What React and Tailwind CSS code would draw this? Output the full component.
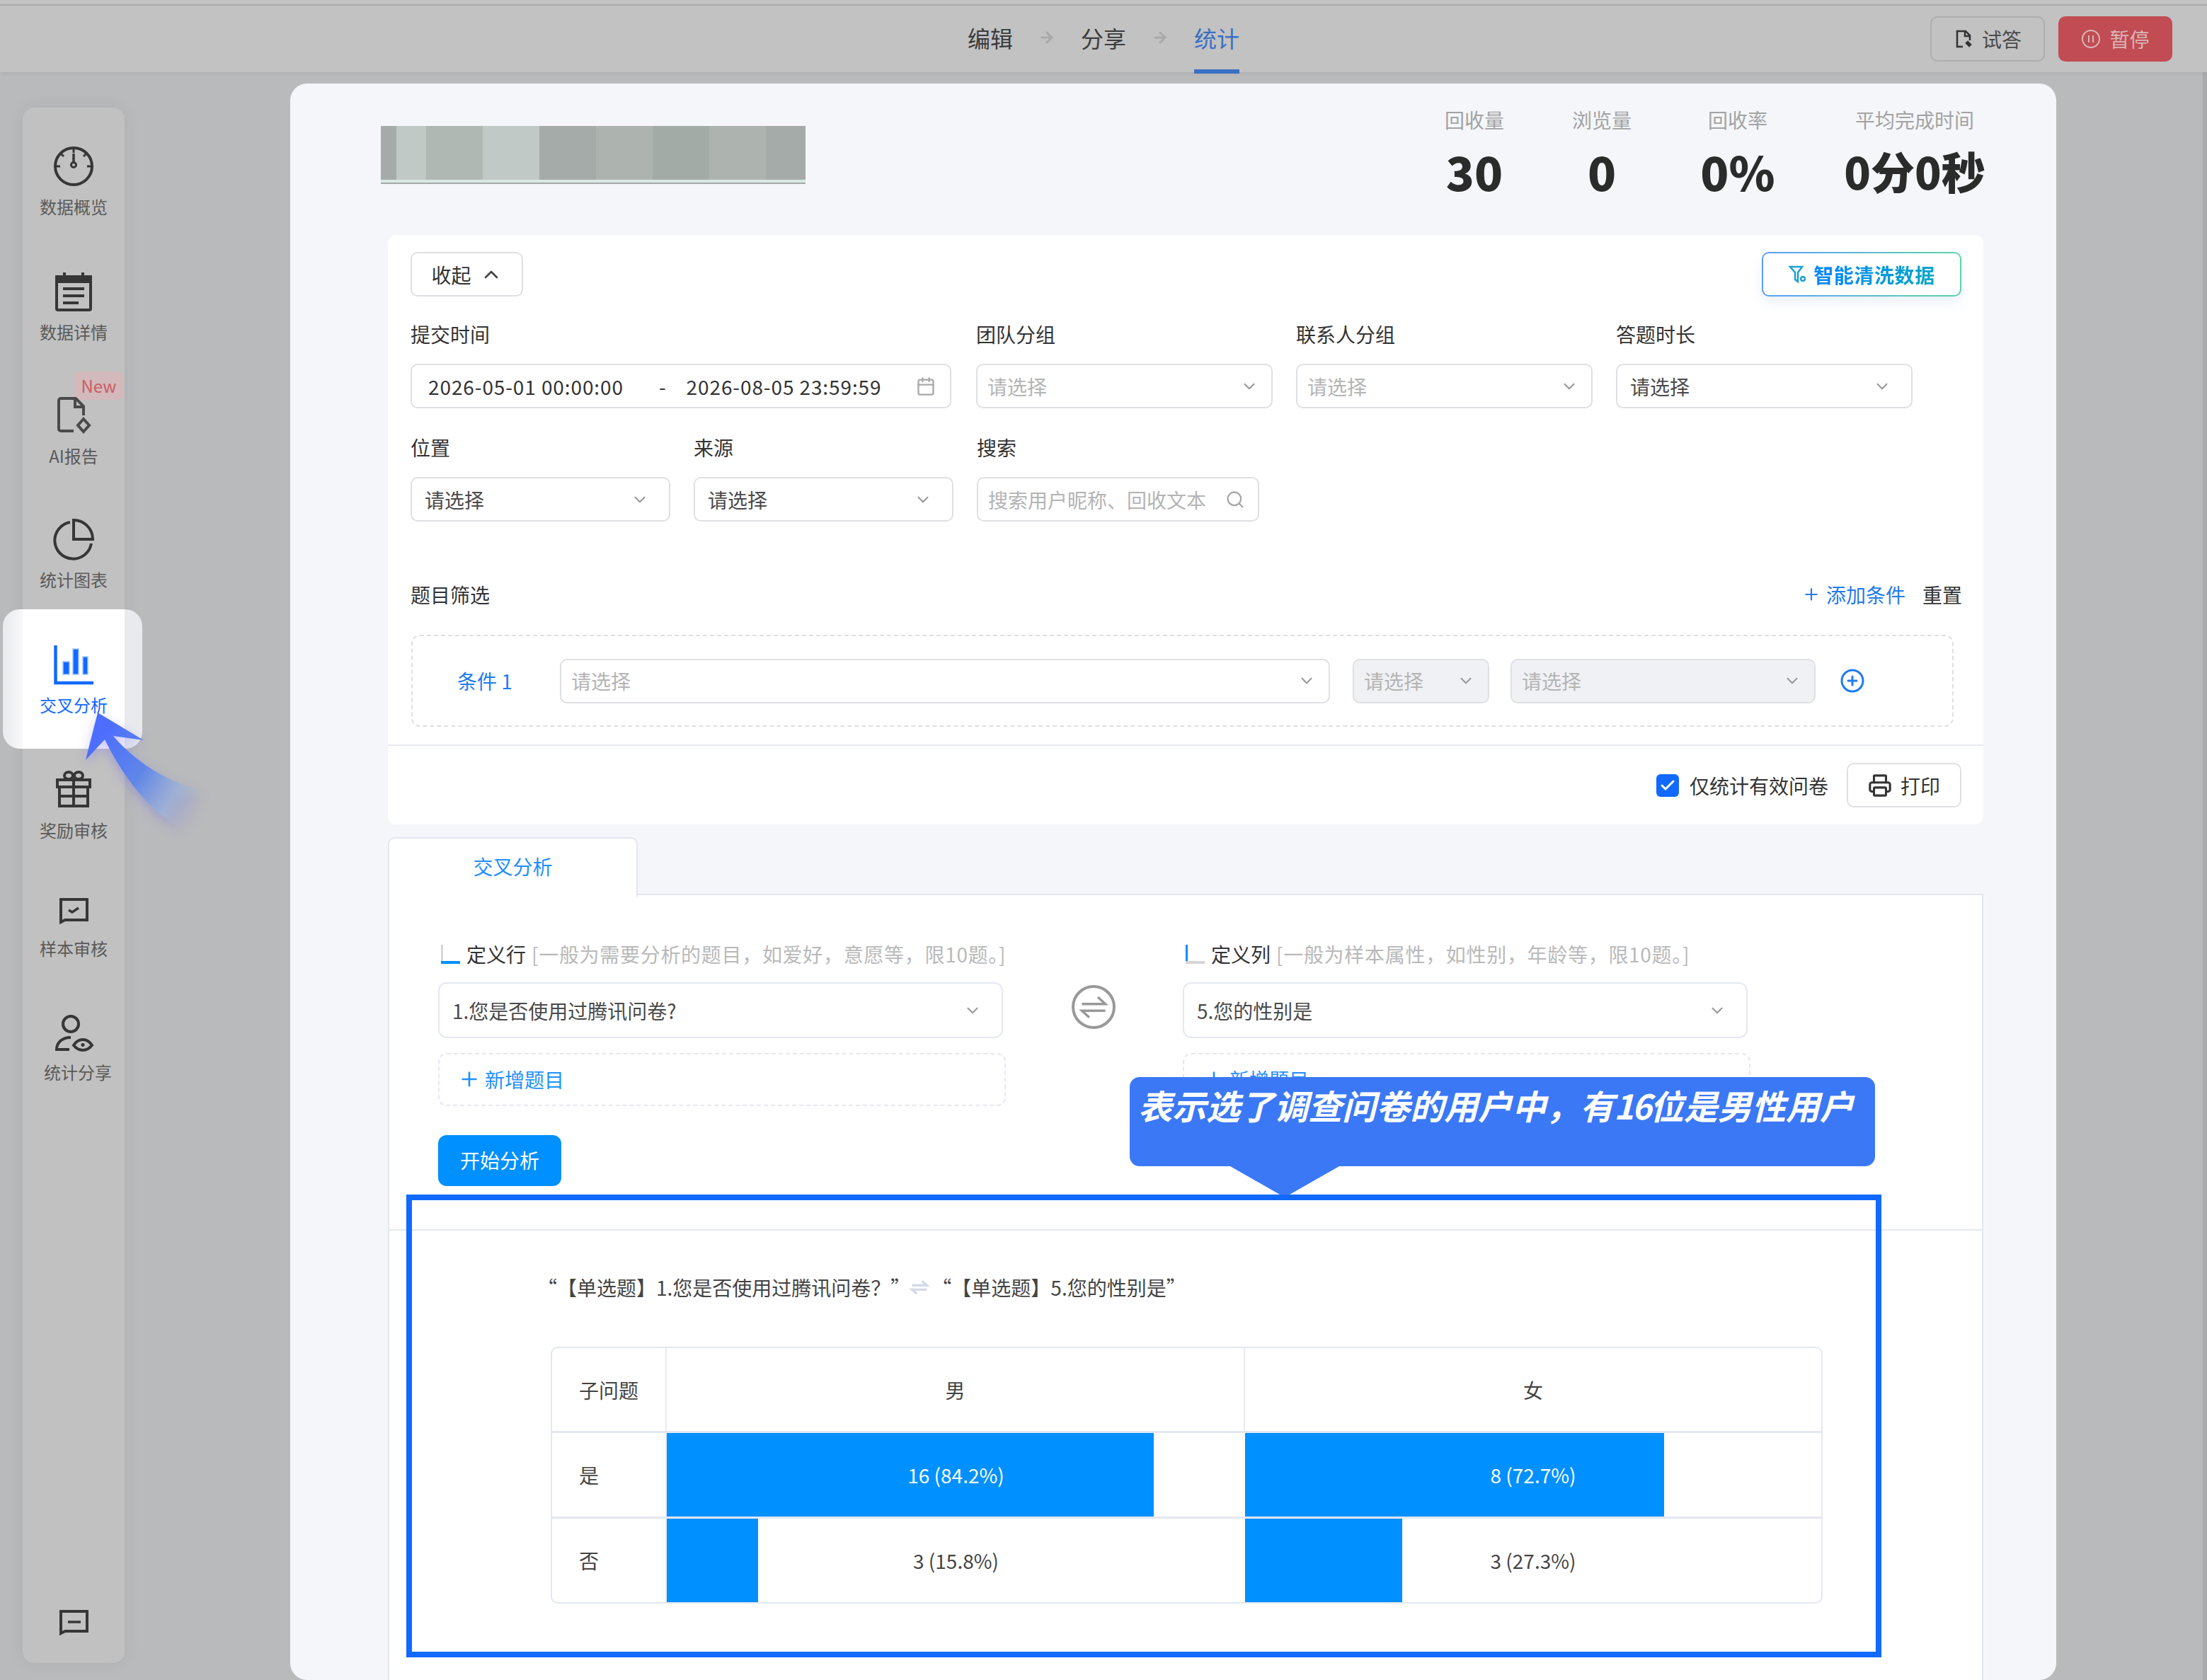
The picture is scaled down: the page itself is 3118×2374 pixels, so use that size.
import { ArrowRight, Calendar, ChevronDown, ChevronUp, Check, CirclePlus, Plus, Printer, Search } from 'lucide-react'

const FONT = "font-['Noto_Sans_CJK_SC','Noto_Sans',sans-serif]"

function GaugeIcon() {
  return (
    <svg viewBox="0 0 60 60" className="h-[60px] w-[60px]" fill="none" stroke="#363636" strokeWidth="4">
      <circle cx="30" cy="30" r="26" />
      <path d="M30 5v6M5 30h6M49 30h6M12 12l4 4M48 12l-4 4" strokeWidth="3" />
      <path d="M30 12v12" strokeWidth="3.5" />
      <circle cx="30" cy="28" r="3.5" strokeWidth="3" />
    </svg>
  )
}

function NoteIcon() {
  return (
    <svg viewBox="0 0 60 60" className="h-[60px] w-[60px]" fill="none" stroke="#363636" strokeWidth="4">
      <rect x="6" y="9" width="48" height="47" rx="2" />
      <path d="M6 9h48v7H6z" fill="#363636" />
      <path d="M17 3v10M43 3v10" />
      <path d="M15 26h30M15 36h30M15 46h22" />
    </svg>
  )
}

function AiFileIcon() {
  return (
    <svg viewBox="0 0 60 60" className="h-[60px] w-[60px]" fill="none" stroke="#4a4a4a" strokeWidth="4">
      <path d="M30 52H12a3 3 0 0 1-3-3V9a3 3 0 0 1 3-3h21l11 11v13" />
      <path d="M32 6v12h12" />
      <path d="M44 35l8 9-8 9-8-9z" />
    </svg>
  )
}

function PieIcon() {
  return (
    <svg viewBox="0 0 60 60" className="h-[60px] w-[60px]" fill="none" stroke="#363636" strokeWidth="4">
      <path d="M25 6a26 26 0 1 0 30 30" />
      <path d="M30 3a27 27 0 0 1 27 27H30z" />
    </svg>
  )
}

function BarsIcon() {
  return (
    <svg viewBox="0 0 60 60" className="h-[60px] w-[60px]">
      <path d="M4.500 3v53h53.500" fill="none" stroke="#1169ff" strokeWidth="4.500" />
      <path d="M15 26h9v18h-9zM29 8h8v36h-8zM43 19h7v25h-7z" fill="#1169ff" stroke="#9fc3ff" strokeWidth="1.500" />
    </svg>
  )
}

function GiftIcon() {
  return (
    <svg viewBox="0 0 60 60" className="h-[60px] w-[60px]" fill="none" stroke="#363636" strokeWidth="4">
      <path d="M7 16h46v10H7zM10 26v27h40V26M30 16v37M10 39h40" />
      <ellipse cx="23" cy="10" rx="6" ry="5" />
      <ellipse cx="37" cy="10" rx="6" ry="5" />
    </svg>
  )
}

function MessageCheckIcon() {
  return (
    <svg viewBox="0 0 60 60" className="h-[60px] w-[60px]" fill="none" stroke="#363636" strokeWidth="4">
      <path d="M12 18h37v29H18l-6 3z" />
      <path d="M23 33l5 3 9-6" strokeWidth="3.500" />
    </svg>
  )
}

function ShareEyeIcon() {
  return (
    <svg viewBox="0 0 60 60" className="h-[60px] w-[60px]" fill="none" stroke="#363636" strokeWidth="4">
      <g transform="translate(0 3)">
        <circle cx="26" cy="16" r="11" />
        <path d="M24 52H6c0-10 8-17 20-17" />
        <path d="M30 46c4-6 8-8 13-8s9 2 13 8c-4 5-8 7-13 7s-9-2-13-7z" />
        <circle cx="43" cy="45.500" r="2.500" fill="#363636" stroke="none" />
      </g>
    </svg>
  )
}

function FeedbackIcon() {
  return (
    <svg viewBox="0 0 60 60" className="h-[60px] w-[60px]" fill="none" stroke="#363636" strokeWidth="4">
      <path d="M12 14h37v28H18l-6 3z" />
      <path d="M22 29h18" strokeWidth="3.500" />
    </svg>
  )
}

function SwapIcon({ className, stroke = '#999999', strokeWidth = 4 }) {
  return (
    <svg viewBox="0 0 62 62" className={className} fill="none" stroke={stroke} strokeWidth={strokeWidth}>
      <path d="M12 26h38L38 15M50 37H12l12 11" />
    </svg>
  )
}

function FunnelIcon() {
  return (
    <svg viewBox="0 0 28 28" className="h-[28px] w-[28px]" fill="none" stroke="#1f9fd0" strokeWidth="2.500">
      <path d="M3 3h17l-6 8v13l-4-3V11z" />
      <circle cx="21" cy="20" r="3" />
    </svg>
  )
}

const navItems = [
  { label: '数据概览', icon: <GaugeIcon />, height: 'h-[177px]' },
  { label: '数据详情', icon: <NoteIcon />, height: 'h-[175px]' },
  { label: 'AI报告', icon: <AiFileIcon />, height: 'h-[175px]', isNew: true },
  { label: '统计图表', icon: <PieIcon />, height: 'h-[177px]' },
  { label: '交叉分析', icon: <BarsIcon />, height: 'h-[177px]', active: true },
  { label: '奖励审核', icon: <GiftIcon />, height: 'h-[167px]' },
  { label: '样本审核', icon: <MessageCheckIcon />, height: 'h-[175px]' },
  { label: '统计分享', icon: <ShareEyeIcon />, height: 'h-[120px]', shift: 'pl-[12px]' },
]

function NavItem({ item }) {
  return (
    <div className={`relative flex flex-col items-center ${item.height}`}>
      {item.active && (
        <div className="absolute -top-[48px] left-[-28px] h-[197px] w-[197px] rounded-[24px] bg-[linear-gradient(90deg,#e9eaee_0,#f8f8fa_28px,#ffffff_28px,#ffffff_172px,#e9eaee_172px)]" />
      )}
      {item.isNew && (
        <span className="absolute -top-[32px] right-[1px] flex h-[40px] w-[71px] items-center justify-center rounded-[8px] bg-[#d3b9bb] text-[24px] text-[#cd5b64]">
          New
        </span>
      )}
      <div className="relative">{item.icon}</div>
      <span
        className={`relative mt-[11px] text-[24px] leading-[32px] ${item.shift || ''} ${
          item.active ? 'text-[#1169ff]' : 'text-[#5a5a5a]'
        }`}
      >
        {item.label}
      </span>
    </div>
  )
}

function Sidebar() {
  return (
    <aside className="ml-[32px] mt-[50px] flex h-[2198px] w-[144px] flex-col rounded-[16px] bg-[#c1c1c1] pt-[53px] shadow-[0_0_24px_rgba(0,0,0,0.06)]">
      {navItems.map((item) => (
        <NavItem key={item.label} item={item} />
      ))}
      <div className="mt-auto mb-[27px] flex justify-center">
        <FeedbackIcon />
      </div>
    </aside>
  )
}

function TopBar() {
  return (
    <header className="relative z-10 grid h-[102px] shrink-0 grid-cols-[1fr_auto_1fr] items-center bg-[#c2c2c2] pt-[8px] shadow-[0_2px_6px_rgba(0,0,0,0.06)]">
      <div className="absolute inset-x-0 top-[6px] h-[2px] bg-[#a9a9a9]" />
      <div />
      <nav className="flex items-center gap-[36px] pb-[5px] text-[32px] text-[#3c3c3c]">
        <span>编辑</span>
        <ArrowRight size={24} color="#a9a9a9" strokeWidth={3} />
        <span>分享</span>
        <ArrowRight size={24} color="#a9a9a9" strokeWidth={3} />
        <span className="relative text-[#3a6fc4]">
          统计
          <span className="absolute -bottom-[27px] left-0 h-[6px] w-full bg-[#3a6fc4]" />
        </span>
      </nav>
      <div className="flex justify-end gap-[19px] pr-[49px]">
        <button className="flex h-[64px] w-[162px] items-center justify-center gap-[12px] rounded-[10px] border-2 border-[#aeaeae] text-[28px] text-[#4a4a4a]">
          <svg viewBox="0 0 28 28" className="h-[28px] w-[28px]" fill="none" stroke="#333333" strokeWidth="2.500">
            <path d="M13 25H5V3h12l6 6v7M16 3v7h7" />
            <path d="M20 18l4 4-2 2-4-4z" fill="#333333" />
          </svg>
          试答
        </button>
        <button className="flex h-[64px] w-[161px] items-center justify-center gap-[12px] rounded-[10px] bg-[#c14c53] text-[28px] text-[#d8b7b9]">
          <svg viewBox="0 0 28 28" className="h-[28px] w-[28px]" fill="none" stroke="#d8b7b9" strokeWidth="2">
            <circle cx="14" cy="14" r="12" />
            <path d="M11 9v10M17 9v10" />
          </svg>
          暂停
        </button>
      </div>
    </header>
  )
}

const mosaic = [
  { width: 'w-[22px]', color: 'bg-[#a5aba8]' },
  { width: 'w-[42px]', color: 'bg-[#c0c9c5]' },
  { width: 'w-[80px]', color: 'bg-[#b0b8b4]' },
  { width: 'w-[80px]', color: 'bg-[#c0c9c5]' },
  { width: 'w-[80px]', color: 'bg-[#a5aba8]' },
  { width: 'w-[80px]', color: 'bg-[#adb4b0]' },
  { width: 'w-[80px]', color: 'bg-[#a3aba7]' },
  { width: 'w-[80px]', color: 'bg-[#adb4b0]' },
  { width: 'w-[56px]', color: 'bg-[#a5aba8]' },
]

const stats = [
  { label: '回收量', value: '30', width: 'w-[160px]', size: 'text-[66px]' },
  { label: '浏览量', value: '0', width: 'w-[200px]', size: 'text-[66px]' },
  { label: '回收率', value: '0%', width: 'w-[184px]', size: 'text-[66px]' },
  { label: '平均完成时间', value: '0分0秒', width: 'w-[316px]', size: 'text-[62px]' },
]

function SummaryRow() {
  return (
    <div className="flex h-[214px] justify-between pl-[128px] pr-[42px]">
      <div className="mt-[60px] w-[600px]">
        <div className="flex h-[76px]">
          {mosaic.map((m, i) => (
            <div key={i} className={`${m.width} ${m.color}`} />
          ))}
        </div>
        <div className="h-[4px] bg-[#d8e8e4]" />
        <div className="h-[2px] bg-[#a5aba8]" />
      </div>
      <div className="flex pt-[31px]">
        {stats.map((s) => (
          <div key={s.label} className={`flex flex-col items-center ${s.width}`}>
            <span className="text-[28px] leading-[40px] text-[#a3a3a3]">{s.label}</span>
            <span className={`mt-[9px] font-black leading-[86px] text-[#2b2b2b] ${s.size}`}>{s.value}</span>
          </div>
        ))}
      </div>
    </div>
  )
}

function Field({ label, width, children }) {
  return (
    <div className={width}>
      <div className="h-[40px] text-[28px] leading-[36px] text-[#333333]">{label}</div>
      <div className="mt-[20px]">{children}</div>
    </div>
  )
}

function Select({ value, placeholder, disabled, className = '' }) {
  return (
    <div
      className={`flex h-[63px] items-center justify-between rounded-[10px] border-2 border-[#dfe0e3] text-[28px] ${
        value ? 'pl-[18px] pr-[28px]' : 'pl-[14px] pr-[18px]'
      } ${disabled ? 'bg-[#f0f1f4]' : 'bg-white'} ${className}`}
    >
      <span className={value ? 'text-[#4a4a4a]' : 'text-[#b4b4b4]'}>{value || placeholder}</span>
      <ChevronDown size={26} color="#9a9a9a" />
    </div>
  )
}

function FilterCard() {
  return (
    <section className="ml-[138px] h-[833px] w-[2254px] rounded-[12px] bg-white pt-[24px]">
      <div className="flex items-start justify-between pl-[32px] pr-[31px]">
        <button className="flex h-[63px] w-[159px] items-center justify-center gap-[12px] rounded-[10px] border-2 border-[#dfe0e3] text-[28px] text-[#333333]">
          收起
          <ChevronUp size={32} color="#444444" />
        </button>
        <div className="h-[63px] w-[282px] rounded-[10px] bg-gradient-to-r from-[#5b9ef7] to-[#5fd3a6] p-[2px] shadow-[0_8px_16px_rgba(60,120,200,0.10)]">
          <div className="flex h-full items-center justify-center gap-[8px] rounded-[8px] bg-white">
            <FunnelIcon />
            <span className="bg-gradient-to-r from-[#0a84ff] to-[#0aa5c5] bg-clip-text text-[28px] font-bold tracking-[0.6px] text-transparent">
              智能清洗数据
            </span>
          </div>
        </div>
      </div>

      <div className="mt-[35px] flex gap-[33px] pl-[32px]">
        <Field label="提交时间" width="w-[766px] pr-[2px]">
          <div className="flex h-[63px] items-center rounded-[10px] border-2 border-[#dfe0e3] pl-[23px] pr-[20px] text-[28px] tracking-[0.9px] text-[#333333]">
            <span>2026-05-01 00:00:00</span>
            <span className="ml-[50px] mr-[28px]">-</span>
            <span className="flex-1">2026-08-05 23:59:59</span>
            <Calendar size={28} color="#a8a8a8" />
          </div>
        </Field>
        <Field label="团队分组" width="w-[419px]">
          <Select placeholder="请选择" />
        </Field>
        <Field label="联系人分组" width="w-[419px]">
          <Select placeholder="请选择" />
        </Field>
        <Field label="答题时长" width="w-[419px]">
          <Select value="请选择" />
        </Field>
      </div>

      <div className="mt-[37px] flex gap-[33px] pl-[32px]">
        <Field label="位置" width="w-[367px]">
          <Select value="请选择" />
        </Field>
        <Field label="来源" width="w-[367px]">
          <Select value="请选择" />
        </Field>
        <Field label="搜索" width="w-[399px]">
          <div className="flex h-[63px] items-center justify-between rounded-[10px] border-2 border-[#dfe0e3] pl-[14px] pr-[18px] text-[28px] text-[#b4b4b4]">
            搜索用户昵称、回收文本
            <Search size={28} color="#a8a8a8" />
          </div>
        </Field>
      </div>

      <div className="mt-[85px] flex h-[40px] items-start justify-between pl-[32px] pr-[30px] text-[28px] leading-[36px] text-[#333333]">
        <span>题目筛选</span>
        <div className="flex items-center gap-[24px]">
          <span className="flex items-center gap-[8px] text-[#1f7bf0]">
            <Plus size={26} />
            添加条件
          </span>
          <span>重置</span>
        </div>
      </div>

      <div className="ml-[33px] mt-[35px] flex h-[130px] w-[2179px] items-center rounded-[12px] border-2 border-dashed border-[#dfe0e3] text-[28px]">
        <span className="ml-[63px] w-[145px] text-[#1f7bf0]">条件 1</span>
        <Select placeholder="请选择" className="w-[1088px]" />
        <Select placeholder="请选择" disabled className="ml-[32px] w-[193px]" />
        <Select placeholder="请选择" disabled className="ml-[30px] w-[431px]" />
        <CirclePlus size={36} color="#1f7bf0" className="ml-[34px]" />
      </div>

      <div className="mt-[25px] h-[2px] bg-[#e6e9f1]" />

      <div className="mt-[24px] flex items-center justify-end pr-[31px]">
        <span className="flex h-[32px] w-[32px] items-center justify-center rounded-[6px] bg-[#1169ff]">
          <Check size={24} color="#ffffff" strokeWidth={3} />
        </span>
        <span className="ml-[15px] text-[28px] text-[#333333]">仅统计有效问卷</span>
        <button className="ml-[26px] flex h-[63px] w-[162px] items-center justify-center gap-[12px] rounded-[10px] border-2 border-[#dfe0e3] text-[28px] text-[#333333]">
          <Printer size={34} color="#333333" strokeWidth={2.2} />
          打印
        </button>
      </div>
    </section>
  )
}

function DefineColumn({ title, hint, value, markBottomClass, markLeftClass, width }) {
  return (
    <div className={width}>
      <div className="flex h-[40px] items-center pl-[4px]">
        <span className="relative mr-[9px] h-[27px] w-[27px]">
          <span className={`absolute bottom-0 left-0 top-0 w-[3px] ${markLeftClass}`} />
          <span className={`absolute bottom-0 left-0 h-[4px] w-full ${markBottomClass}`} />
        </span>
        <span className="text-[28px] text-[#333333]">{title}</span>
        <span className="ml-[8px] whitespace-nowrap text-[28px] tracking-[0.7px] text-[#b9b9b9]">{hint}</span>
      </div>
      <div className="mt-[20px] flex h-[79px] w-[798px] items-center justify-between rounded-[12px] border-2 border-[#e5e8f2] pl-[18px] pr-[28px] text-[28px] text-[#4a4a4a]">
        {value}
        <ChevronDown size={26} color="#9a9a9a" />
      </div>
      <div className="mt-[21px] flex h-[75px] w-[802px] items-center gap-[6px] rounded-[12px] border-2 border-dashed border-[#e5e8f2] pb-[2px] pl-[26px] text-[28px] text-[#1f8fff]">
        <Plus size={32} />
        新增题目
      </div>
    </div>
  )
}

function CrossTable() {
  const rows = [
    {
      label: '是',
      cells: [
        { text: '16 (84.2%)', pct: 84.2, light: true },
        { text: '8 (72.7%)', pct: 72.7, light: true },
      ],
    },
    {
      label: '否',
      cells: [
        { text: '3 (15.8%)', pct: 15.8 },
        { text: '3 (27.3%)', pct: 27.3 },
      ],
    },
  ]

  return (
    <div className="ml-[228px] mt-[64px] w-[1797px] overflow-hidden rounded-[10px] border-2 border-[#e3e7f1] text-[28px] text-[#444444]">
      <div className="grid h-[117px] grid-cols-[162px_817px_1fr] items-stretch">
        <div className="flex items-center border-r-2 border-[#e8ebf3] pl-[38px]">子问题</div>
        <div className="flex items-center justify-center border-r-2 border-[#e8ebf3]">男</div>
        <div className="flex items-center justify-center">女</div>
      </div>
      {rows.map((row) => (
        <div key={row.label} className="grid h-[121px] grid-cols-[162px_817px_1fr] border-t-[3px] border-[#e3e7f1]">
          <div className="flex items-center border-r-2 border-[#e8ebf3] pl-[38px]">{row.label}</div>
          {row.cells.map((cell) => (
            <div key={cell.text} className="relative flex items-center justify-center">
              <div className="absolute inset-y-0 left-0 bg-[#0090ff]" style={{ width: `${cell.pct}%` }} />
              <span className={`relative ${cell.light ? 'text-white' : ''}`}>{cell.text}</span>
            </div>
          ))}
        </div>
      ))}
    </div>
  )
}

function AnalysisPanel() {
  return (
    <section className="ml-[138px] mt-[18px] w-[2254px]">
      <div className="flex h-[82px]">
        <div className="flex h-[84px] w-[353px] items-center justify-center rounded-t-[10px] border-2 border-b-0 border-[#e3e7f1] bg-white pb-[4px] text-[28px] text-[#1f8fff]">
          交叉分析
        </div>
        <div className="flex-1 border-b-2 border-[#e3e7f1]" />
      </div>
      <div className="h-[1200px] border-x-2 border-[#e3e7f1] bg-white pt-[63px]">
        <div className="flex pl-[69px]">
          <DefineColumn
            title="定义行"
            hint="[一般为需要分析的题目，如爱好，意愿等，限10题。]"
            value="1.您是否使用过腾讯问卷?"
            markLeftClass="bg-[#d6d6d6]"
            markBottomClass="bg-[#0090ff]"
            width="w-[864px]"
          />
          <div className="w-[188px] pl-[31px] pt-[64px]">
            <div className="flex h-[62px] w-[62px] items-center justify-center rounded-full border-[4px] border-[#999999]">
              <SwapIcon className="h-[54px] w-[54px]" />
            </div>
          </div>
          <DefineColumn
            title="定义列"
            hint="[一般为样本属性，如性别，年龄等，限10题。]"
            value="5.您的性别是"
            markLeftClass="bg-[#0090ff]"
            markBottomClass="bg-[#d6d6d6]"
            width="w-[802px]"
          />
        </div>
        <button className="ml-[69px] mt-[41px] flex h-[72px] w-[174px] items-center justify-center rounded-[12px] bg-[#0090ff] pb-[2px] text-[28px] text-white">
          开始分析
        </button>
        <div className="mt-[61px] h-[2px] bg-[#e3e7f1]" />
        <div className="ml-[209px] mt-[60px] flex h-[40px] items-center text-[28px] text-[#444444]">
          <span>“</span>
          <span>【单选题】1.您是否使用过腾讯问卷？”</span>
          <SwapIcon className="-ml-[4px] h-[34px] w-[34px]" stroke="#d3d9e6" strokeWidth={6} />
          <span>“</span>
          <span>【单选题】5.您的性别是”</span>
        </div>
        <CrossTable />
      </div>
    </section>
  )
}

function MainCard() {
  return (
    <main className="ml-[234px] mt-[16px] h-[2256px] w-[2495px] overflow-hidden rounded-[24px] bg-[#f4f6fa]">
      <SummaryRow />
      <FilterCard />
      <AnalysisPanel />
    </main>
  )
}

function GuideArrow() {
  return (
    <svg viewBox="100 990 200 200" className="absolute left-[100px] top-[990px] h-[200px] w-[200px] overflow-visible drop-shadow-[0_6px_8px_rgba(80,70,255,0.3)]">
      <defs>
        <linearGradient id="guideFade" gradientUnits="userSpaceOnUse" x1="140" y1="1040" x2="282" y2="1140">
          <stop offset="0" stopColor="#4d6dff" />
          <stop offset="0.45" stopColor="#5f86e8" />
          <stop offset="0.78" stopColor="#9fb4d6" stopOpacity="0.8" />
          <stop offset="1" stopColor="#b9babc" stopOpacity="0" />
        </linearGradient>
      </defs>
      <path
        d="M138 1007 L203 1046 L160 1040 C190 1075 235 1105 283 1116 L273 1180 C225 1160 180 1110 148 1045 L121 1074 Z"
        fill="url(#guideFade)"
      />
    </svg>
  )
}

function Callout() {
  return (
    <div className="absolute left-[1596px] top-[1522px] w-[1053px]">
      <div className="h-[126px] rounded-[14px] bg-[#3b78f5] pl-[12px] pt-[6px] text-[48px] font-bold italic leading-[66px] text-white">
        表示选了调查问卷的用户中，有<span className="tracking-[-3px]">16</span>位是男性用户
      </div>
      <div className="ml-[142px] h-0 w-0 border-x-[77px] border-t-[44px] border-x-transparent border-t-[#3b78f5]" />
    </div>
  )
}

export default function App() {
  return (
    <div className={`relative flex h-[2374px] w-[3118px] flex-col overflow-hidden bg-[#b9babc] ${FONT}`}>
      <TopBar />
      <div className="flex flex-1">
        <Sidebar />
        <MainCard />
      </div>
      <div className="absolute bottom-0 right-0 top-[102px] w-[6px] bg-[#a9aaac]" />
      <GuideArrow />
      <Callout />
      <div className="absolute left-[574px] top-[1688px] h-[654px] w-[2084px] border-[8px] border-[#1169ff]" />
    </div>
  )
}
